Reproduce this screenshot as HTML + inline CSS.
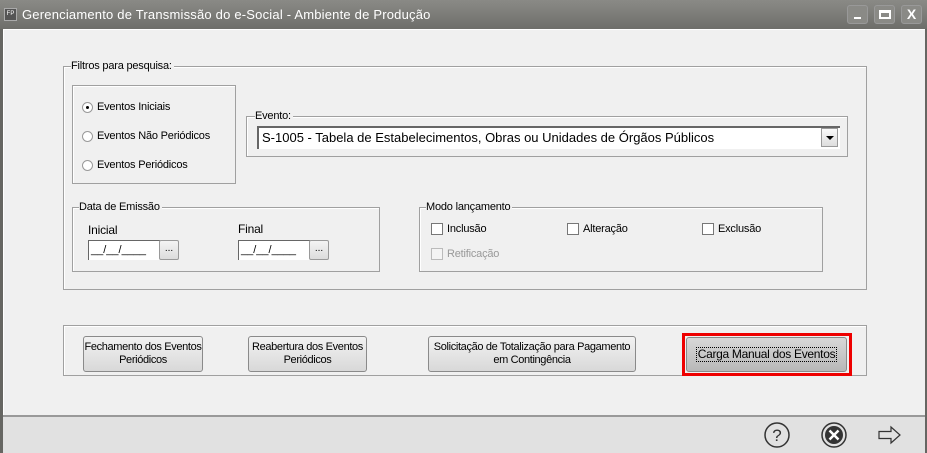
<!DOCTYPE html>
<html><head><meta charset="utf-8"><style>
*{box-sizing:border-box;margin:0;padding:0}
body{width:927px;height:453px;position:relative;overflow:hidden;background:#666662;font-family:"Liberation Sans",Tahoma,sans-serif;font-size:11px;color:#000}
.a{position:absolute}
#title{left:0;top:0;width:927px;height:29px;background:linear-gradient(#8a8a86,#6e6e6a);}
#content{left:3px;top:29px;width:922px;height:386px;background:#f0f0f0;border-top:1px solid #fff;border-left:1px solid #fff}
#bottom{left:3px;top:415px;width:922px;height:38px;background:#e1e1e1;border-top:2px solid #999}
.grp{position:absolute;border:1px solid #a0a0a0;box-shadow:1px 1px 0 #fff inset}
.lbl{position:absolute;background:#f0f0f0;font-size:11px;line-height:13px;padding-right:2px;letter-spacing:-0.2px}
.t{position:absolute;font-size:11px;line-height:13px;white-space:nowrap;letter-spacing:-0.2px}
.radio{position:absolute;width:11px;height:11px;border-radius:50%;background:#fff;border:1px solid #999}
.cb{position:absolute;width:12px;height:12px;background:#fff;border:1px solid #777}
.btn{position:absolute;border:1px solid #8a8a8a;border-radius:3px;background:linear-gradient(#f2f2f2,#d8d8d8);text-align:center;font-size:11px;line-height:13px;display:flex;align-items:center;justify-content:center;white-space:nowrap;letter-spacing:-0.35px}
.wb{position:absolute;top:5px;width:21px;height:19px;border:1px solid #999;border-radius:3px;background:#8a8a86}
.date{position:absolute;height:20px;background:#fff;border-top:1px solid #666;border-left:1px solid #666;font-size:11px;line-height:18px;padding-left:2px}
.db{position:absolute;width:20px;height:20px;border:1px solid #999;border-radius:2px;background:linear-gradient(#f4f4f4,#dcdcdc);text-align:center;font-size:10px;line-height:16px}
</style></head><body>
<div id="title" class="a"></div>
<div class="a" style="left:4px;top:8px;width:13px;height:13px;background:#555;border:1px solid #aaa;color:#fff;font-size:6px;line-height:11px;text-align:center">FP</div>
<div class="a" style="left:22px;top:7px;color:#fff;font-size:13px;line-height:16px;white-space:nowrap;letter-spacing:0.2px">Gerenciamento de Transmissão do e-Social - Ambiente de Produção</div>
<div class="wb" style="left:847px"><div class="a" style="left:6px;top:11px;width:7px;height:2px;background:#fff"></div></div>
<div class="wb" style="left:874px"><div class="a" style="left:4px;top:4px;width:12px;height:9px;border:2px solid #fff;border-top-width:3px"></div></div>
<div class="wb" style="left:901px;color:#fff;font-weight:bold;font-size:14px;line-height:17px;text-align:center">X</div>
<div id="content" class="a"></div>
<div id="bottom" class="a"></div>

<div class="grp" style="left:63px;top:66px;width:804px;height:224px"></div>
<div class="lbl" style="left:71px;top:60px">Filtros para pesquisa:</div>
<div class="grp" style="left:72px;top:85px;width:164px;height:99px"></div>
<div class="radio" style="left:82px;top:102px"><div class="a" style="left:3px;top:3px;width:3px;height:3px;background:#000;border-radius:50%"></div></div>
<div class="t" style="left:97px;top:101px">Eventos Iniciais</div>
<div class="radio" style="left:82px;top:131px"></div>
<div class="t" style="left:97px;top:130px">Eventos Não Periódicos</div>
<div class="radio" style="left:82px;top:160px"></div>
<div class="t" style="left:97px;top:159px">Eventos Periódicos</div>

<div class="grp" style="left:246px;top:116px;width:602px;height:41px"></div>
<div class="lbl" style="left:255px;top:110px">Evento:</div>
<div class="a" style="left:257px;top:126px;width:583px;height:23px;background:#fff;border-top:2px solid #666;border-left:2px solid #666;font-size:13px;line-height:20px;padding-left:3px;white-space:nowrap">S-1005 - Tabela de Estabelecimentos, Obras ou Unidades de Órgãos Públicos</div>
<div class="a" style="left:821px;top:128px;width:17px;height:19px;background:linear-gradient(#fafafa,#ddd);border:1px solid #999"><div class="a" style="left:4px;top:7px;border-left:4px solid transparent;border-right:4px solid transparent;border-top:4px solid #000"></div></div>

<div class="grp" style="left:72px;top:207px;width:308px;height:65px"></div>
<div class="lbl" style="left:79px;top:201px">Data de Emissão</div>
<div class="t" style="left:88px;top:224px;font-size:12px">Inicial</div>
<div class="date" style="left:88px;top:240px;width:72px">__/__/____</div>
<div class="db" style="left:159px;top:240px">...</div>
<div class="t" style="left:238px;top:223px;font-size:12px">Final</div>
<div class="date" style="left:238px;top:240px;width:72px">__/__/____</div>
<div class="db" style="left:309px;top:240px">...</div>

<div class="grp" style="left:419px;top:207px;width:404px;height:65px"></div>
<div class="lbl" style="left:426px;top:201px">Modo lançamento</div>
<div class="cb" style="left:431px;top:223px"></div><div class="t" style="left:447px;top:223px">Inclusão</div>
<div class="cb" style="left:567px;top:223px"></div><div class="t" style="left:583px;top:223px">Alteração</div>
<div class="cb" style="left:702px;top:223px"></div><div class="t" style="left:718px;top:223px">Exclusão</div>
<div class="cb" style="left:431px;top:248px;border-color:#bbb;background:#f4f4f4"></div><div class="t" style="left:447px;top:248px;color:#999">Retificação</div>

<div class="grp" style="left:63px;top:325px;width:804px;height:51px"></div>
<div class="btn" style="left:83px;top:336px;width:120px;height:36px">Fechamento dos Eventos<br>Periódicos</div>
<div class="btn" style="left:248px;top:336px;width:119px;height:36px">Reabertura dos Eventos<br>Periódicos</div>
<div class="btn" style="left:428px;top:336px;width:208px;height:36px">Solicitação de Totalização para Pagamento<br>em Contingência</div>
<div class="a" style="left:682px;top:333px;width:170px;height:43px;border:3px solid #e00"></div>
<div class="btn" style="left:686px;top:337px;width:161px;height:35px;background:linear-gradient(#d8d8d8,#b8b8b8)"><span style="border:1px dotted #000;padding:0 1px;font-size:12px;letter-spacing:-0.3px">Carga Manual dos Eventos</span></div>

<svg class="a" style="left:760px;top:421px" width="150" height="30">
<circle cx="17" cy="14" r="12" fill="none" stroke="#333" stroke-width="1.5"/>
<text x="17" y="20" text-anchor="middle" font-family="Liberation Sans" font-size="17" fill="#333">?</text>
<circle cx="74" cy="14" r="12" fill="none" stroke="#333" stroke-width="1.5"/>
<circle cx="74" cy="14" r="9" fill="#333"/>
<path d="M69.5 9.5l9 9M78.5 9.5l-9 9" stroke="#fff" stroke-width="2.5"/>
<path d="M119 10.5h12V6l9 8-9 8v-4.5h-12z" fill="none" stroke="#333" stroke-width="1.2" stroke-linejoin="miter"/>
</svg>
</body></html>
